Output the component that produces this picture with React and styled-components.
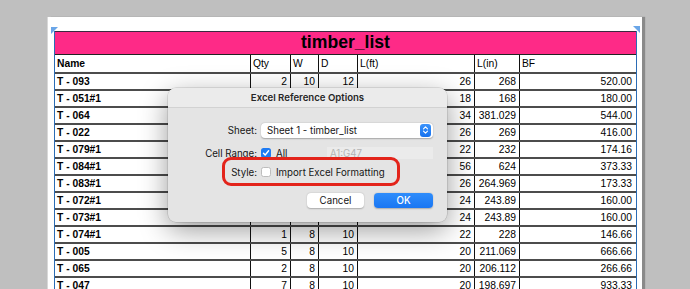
import React from 'react';
import styled, { createGlobalStyle } from 'styled-components';

const GlobalStyle = createGlobalStyle`
  html, body {
    margin: 0;
    padding: 0;
    background: #bfbfbf;
    overflow: hidden;
  }
`;

const Stage = styled.div`
  position: relative;
  width: 690px;
  height: 289px;
  overflow: hidden;
  padding: 17px 0 0 48px;
  box-sizing: border-box;
  background: #bfbfbf;
`;

const Page = styled.div`
  position: relative;
  width: 594px;
  height: 300px;
  background: #ffffff;
  box-shadow: 3px 0 1px rgba(0, 0, 0, 0.28), -1px 0 0 #d8d8d8;
  padding: 14px 0 0 6px;
  box-sizing: border-box;
`;

const Table = styled.div`
  width: 583px;
  border-left: 1px solid #2b6cb5;
  border-right: 1px solid #2b6cb5;
  box-sizing: border-box;
  font-family: "Liberation Sans", Arial, sans-serif;
  font-size: 10.3px;
  color: #000;
`;

const TitleBar = styled.div`
  height: 24px;
  box-sizing: border-box;
  background: #fe2a87;
  border-top: 1px solid #3a2a40;
  border-bottom: 1px solid #222;
  display: flex;
  align-items: center;
  justify-content: center;
  font-size: 17.6px;
  font-weight: 700;
  padding-bottom: 1px;
`;

const Row = styled.div`
  display: grid;
  grid-template-columns: 195px 40px 28px 39px 117px 45px 116px;
  height: 17px;
  box-sizing: border-box;
  border-top: ${p => (p.$head ? 'none' : '2px solid #4c4c4c')};
`;

const Cell = styled.div`
  display: flex;
  align-items: center;
  justify-content: ${p => (p.$num ? 'flex-end' : 'flex-start')};
  padding: 0 ${p => (p.$num ? '3px' : '0')} 1px ${p => (p.$num ? '0' : '2px')};
  border-left: ${p => (p.$first ? 'none' : '1.5px solid #111')};
  font-weight: ${p => (p.$bold ? 700 : 400)};
  white-space: nowrap;
  overflow: hidden;
`;

const Handle = styled.svg`
  position: absolute;
  top: ${p => p.$top}px;
  left: ${p => p.$left}px;
`;

const Dialog = styled.div`
  position: absolute;
  left: 168px;
  top: 88px;
  width: 279px;
  height: 134px;
  border-radius: 8px;
  background: #e4e4e4;
  box-shadow: 0 0 0 0.5px rgba(0, 0, 0, 0.18), 0 8px 28px rgba(0, 0, 0, 0.4);
  font-family: Inter, "Noto Sans", sans-serif;
  font-size: 9.7px;
  color: #161616;
  overflow: hidden;
`;

const DialogTitle = styled.div`
  height: 20px;
  box-sizing: border-box;
  background: #ebebeb;
  border-bottom: 1px solid #d2d2d2;
  display: flex;
  align-items: center;
  justify-content: center;
  font-weight: 600;
  font-size: 9.6px;
  color: #262626;
`;

const FormRow = styled.div`
  display: grid;
  grid-template-columns: 89px 172px;
  column-gap: 4px;
  align-items: center;
  height: 16px;
  margin-top: ${p => p.$mt}px;
`;

const Label = styled.div`
  text-align: right;
`;

const Control = styled.div`
  display: flex;
  align-items: center;
  gap: 5px;
  height: 100%;
`;

const Select = styled.div`
  position: relative;
  width: 172px;
  height: 15px;
  box-sizing: border-box;
  background: #fff;
  border-radius: 4px;
  box-shadow: 0 0.5px 1.5px rgba(0, 0, 0, 0.28);
  display: flex;
  align-items: center;
  padding-left: 6px;
`;

const Stepper = styled.div`
  position: absolute;
  right: 2px;
  top: 1px;
  width: 11px;
  height: 13px;
  border-radius: 3px;
  background: linear-gradient(#3b93fb, #1571ee);
  display: flex;
  align-items: center;
  justify-content: center;
`;

const Box = styled.div`
  width: 10px;
  height: 10px;
  box-sizing: border-box;
  border-radius: 2.5px;
  background: ${p => (p.$checked ? '#1e7bf3' : '#fff')};
  border: ${p => (p.$checked ? 'none' : '0.5px solid #bdbdbd')};
  display: flex;
  align-items: center;
  justify-content: center;
  flex: none;
`;

const Field = styled.div`
  margin-left: auto;
  width: 106px;
  height: 12px;
  background: #ebebeb;
  color: #b4b4b4;
  display: flex;
  align-items: center;
  padding-left: 3px;
  box-sizing: border-box;
`;

const Buttons = styled.div`
  display: flex;
  justify-content: flex-end;
  gap: 10px;
  padding-right: 14px;
  margin-top: 13px;
`;

const Button = styled.div`
  width: ${p => p.$w}px;
  height: 15px;
  border-radius: 4px;
  display: flex;
  align-items: center;
  justify-content: center;
  background: ${p => (p.$primary ? 'linear-gradient(#2f8dfb, #1976f3)' : '#fff')};
  color: ${p => (p.$primary ? '#fff' : '#161616')};
  box-shadow: 0 0.5px 1.5px rgba(0, 0, 0, 0.25);
  font-weight: ${p => (p.$primary ? 500 : 400)};
`;

const Highlight = styled.div`
  position: absolute;
  left: 54px;
  top: 69px;
  width: 178px;
  height: 29px;
  box-sizing: border-box;
  border: 3px solid #e3241b;
  border-radius: 9px;
`;

const header = ['Name', 'Qty', 'W', 'D', 'L(ft)', 'L(in)', 'BF'];

// Qty / W / D of the rows under the dialog are hidden, so they stay blank
const rows = [
  ['T - 093', '2', '10', '12', '26', '268', '520.00'],
  ['T - 051#1', '', '', '', '18', '168', '180.00'],
  ['T - 064', '', '', '', '34', '381.029', '544.00'],
  ['T - 022', '', '', '', '26', '269', '416.00'],
  ['T - 079#1', '', '', '', '22', '232', '174.16'],
  ['T - 084#1', '', '', '', '56', '624', '373.33'],
  ['T - 083#1', '', '', '', '26', '264.969', '173.33'],
  ['T - 072#1', '', '', '', '24', '243.89', '160.00'],
  ['T - 073#1', '', '', '', '24', '243.89', '160.00'],
  ['T - 074#1', '1', '8', '10', '22', '228', '146.66'],
  ['T - 005', '5', '8', '10', '20', '211.069', '666.66'],
  ['T - 065', '2', '8', '10', '20', '206.112', '266.66'],
  ['T - 047', '7', '8', '10', '20', '198.697', '933.33'],
];

const Check = () => (
  <svg width="8" height="8" viewBox="0 0 8 8">
    <path d="M1.5 4.2 L3.2 6 L6.6 1.8" fill="none" stroke="#fff" strokeWidth="1.4" strokeLinecap="round" strokeLinejoin="round" />
  </svg>
);

export default function App() {
  return (
    <>
      <GlobalStyle />
      <Stage>
        <Page>
          <Handle $left={3} $top={10} width="7" height="7" viewBox="0 0 7 7">
            <path d="M0 0 H7 L0 7 Z" fill="#6aa6e8" />
          </Handle>
          <Handle $left={585} $top={9} width="7" height="7" viewBox="0 0 7 7">
            <path d="M0 0 H7 V7 Z" fill="#6aa6e8" />
          </Handle>
          <Table>
            <TitleBar>timber_list</TitleBar>
            <Row $head>
              {header.map((h, i) => (
                <Cell key={h} $first={i === 0} $bold={i === 0}>{h}</Cell>
              ))}
            </Row>
            {rows.map(r => (
              <Row key={r[0]}>
                {r.map((v, i) => (
                  <Cell key={i} $first={i === 0} $bold={i === 0} $num={i > 0}>{v}</Cell>
                ))}
              </Row>
            ))}
          </Table>
        </Page>

        <Dialog>
          <DialogTitle>Excel Reference Options</DialogTitle>
          <FormRow $mt={14}>
            <Label>Sheet:</Label>
            <Control>
              <Select>
                Sheet 1 - timber_list
                <Stepper>
                  <svg width="7" height="10" viewBox="0 0 7 10">
                    <path d="M1.5 3.8 L3.5 1.8 L5.5 3.8 M1.5 6.2 L3.5 8.2 L5.5 6.2" fill="none" stroke="#fff" strokeWidth="1.1" strokeLinecap="round" strokeLinejoin="round" />
                  </svg>
                </Stepper>
              </Select>
            </Control>
          </FormRow>
          <FormRow $mt={7}>
            <Label>Cell Range:</Label>
            <Control>
              <Box $checked><Check /></Box>
              All
              <Field>A1:G47</Field>
            </Control>
          </FormRow>
          <FormRow $mt={3}>
            <Label>Style:</Label>
            <Control>
              <Box />
              Import Excel Formatting
            </Control>
          </FormRow>
          <Buttons>
            <Button $w={57}>Cancel</Button>
            <Button $w={59} $primary>OK</Button>
          </Buttons>
          <Highlight />
        </Dialog>
      </Stage>
    </>
  );
}
